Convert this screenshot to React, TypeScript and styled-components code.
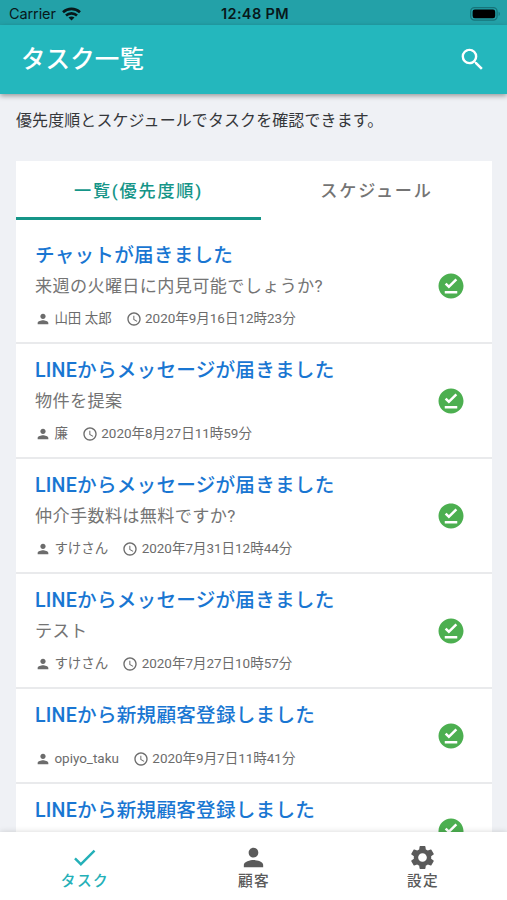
import React from "react";
import styled, { createGlobalStyle } from "styled-components";
import {
  MdAccessTime,
  MdCheck,
  MdOfflinePin,
  MdPerson,
  MdSearch,
  MdSettings,
} from "react-icons/md";

const GlobalStyle = createGlobalStyle`
  *, *::before, *::after { box-sizing: border-box; }
  body {
    margin: 0;
    background: #eff1f5;
    font-family: Roboto, "Noto Sans CJK JP", sans-serif;
  }
  svg { display: block; flex-shrink: 0; }
`;

const Screen = styled.div`
  display: flex;
  flex-direction: column;
  width: 100%;
  height: 900px;
  overflow: hidden;
`;

const StatusBar = styled.div`
  display: grid;
  grid-template-columns: 1fr auto 1fr;
  align-items: center;
  height: 25px;
  flex-shrink: 0;
  padding: 2px 6px 0 9px;
  background: #23a1a8;
  color: #08181a;
  font-family: Inter, sans-serif;
  font-size: 14.5px;
`;

const Carrier = styled.div`
  display: flex;
  align-items: center;
  gap: 6px;
  letter-spacing: -0.1px;
`;

const Clock = styled.div`
  font-weight: 600;
  letter-spacing: 0.35px;
`;

const BatterySlot = styled.div`
  display: flex;
  justify-content: flex-end;
`;

const AppBar = styled.header`
  position: relative;
  z-index: 1;
  display: flex;
  align-items: center;
  justify-content: space-between;
  height: 69px;
  flex-shrink: 0;
  padding: 0 20px 0 21px;
  background: #24b7bd;
  color: #fff;
  box-shadow: 0 2px 5px rgba(0, 0, 0, 0.36);
`;

const PageTitle = styled.h1`
  margin: 0;
  padding-top: 1px;
  font-size: 24.5px;
  font-weight: 500;
  line-height: 36px;
  letter-spacing: 0.1px;
`;

const Content = styled.main`
  flex: 1;
  min-height: 0;
  overflow: hidden;
  padding: 0 15px 0 16px;
`;

const Lead = styled.p`
  margin: 0;
  padding-top: 15px;
  height: 67px;
  font-size: 15.95px;
  line-height: 24px;
  letter-spacing: 0.15px;
  color: #35373a;
  white-space: nowrap;
`;

const Card = styled.section`
  background: #fff;
`;

const Tabs = styled.div`
  display: grid;
  grid-template-columns: 245px 1fr;
  height: 68px;
`;

const Tab = styled.button<{ $active?: boolean }>`
  height: 59px;
  padding: 3px 0 0;
  border: 0;
  border-bottom: 3px solid ${(p) => (p.$active ? "#159588" : "transparent")};
  background: none;
  font: 500 17.14px/24px Roboto, "Noto Sans CJK JP", sans-serif;
  letter-spacing: 1.8px;
  color: ${(p) => (p.$active ? "#159588" : "#747474")};
`;

const TaskRow = styled.article<{ $short?: boolean }>`
  display: flex;
  align-items: center;
  justify-content: space-between;
  height: ${(p) => (p.$short ? 95 : 115)}px;
  padding: 0 26px 0 19px;
  border-bottom: 2px solid #e9eaec;
`;

const TaskText = styled.div`
  display: flex;
  flex-direction: column;
  padding-top: 2px;
  white-space: nowrap;
`;

const TaskTitle = styled.h2`
  margin: 0;
  font-size: 19.6px;
  font-weight: 500;
  line-height: 30px;
  letter-spacing: 0.24px;
  color: #1976d2;
`;

const TaskBody = styled.p`
  margin: 0;
  min-height: 10px;
  font-size: 17.14px;
  line-height: 30px;
  letter-spacing: 0.35px;
  color: #747474;
`;

const Meta = styled.div`
  display: flex;
  gap: 14px;
  height: 24px;
  margin: 6px 0 1px;
  font-size: 13.47px;
  line-height: 24px;
  color: #6c6c6c;
`;

const MetaItem = styled.span`
  display: flex;
  align-items: center;
  gap: 3.4px;
`;

const BottomNav = styled.nav`
  position: relative;
  z-index: 1;
  display: grid;
  grid-template-columns: repeat(3, 1fr);
  height: 68px;
  flex-shrink: 0;
  background: #fff;
  box-shadow: 0 0 6px rgba(0, 0, 0, 0.16);
`;

const NavItem = styled.button<{ $active?: boolean }>`
  display: flex;
  flex-direction: column;
  align-items: center;
  padding: 11px 0 0;
  border: 0;
  background: none;
  font: 500 14.7px/18px Roboto, "Noto Sans CJK JP", sans-serif;
  letter-spacing: 1.4px;
  color: ${(p) => (p.$active ? "#24b0b8" : "#5a5a5a")};
`;

const NavIcon = styled.span`
  display: block;
  height: 29px;
`;

const NavLabel = styled.span`
  padding-left: 1px;
`;

type Task = { title: string; body?: string; person?: string; time?: string };

const tasks: Task[] = [
  {
    title: "チャットが届きました",
    body: "来週の火曜日に内見可能でしょうか?",
    person: "山田 太郎",
    time: "2020年9月16日12時23分",
  },
  {
    title: "LINEからメッセージが届きました",
    body: "物件を提案",
    person: "廉",
    time: "2020年8月27日11時59分",
  },
  {
    title: "LINEからメッセージが届きました",
    body: "仲介手数料は無料ですか?",
    person: "すけさん",
    time: "2020年7月31日12時44分",
  },
  {
    title: "LINEからメッセージが届きました",
    body: "テスト",
    person: "すけさん",
    time: "2020年7月27日10時57分",
  },
  {
    title: "LINEから新規顧客登録しました",
    person: "opiyo_taku",
    time: "2020年9月7日11時41分",
  },
  {
    title: "LINEから新規顧客登録しました",
  },
];

function WifiIcon() {
  return (
    <svg width="19" height="14" viewBox="0 0 19 14" fill="none" stroke="currentColor" strokeWidth="2.6">
      <path d="M1 5.2C5.8.7 13.2.7 18 5.2" />
      <path d="M4 8.5c3.1-2.9 7.9-2.9 11 0" />
      <path d="M9.5 13.6 6.5 10.5c1.7-1.5 4.3-1.5 6 0z" fill="currentColor" stroke="none" />
    </svg>
  );
}

function BatteryIcon() {
  return (
    <svg width="31" height="14" viewBox="0 0 31 14">
      <rect x="0.7" y="0.7" width="26.4" height="12.4" rx="3.8" fill="none" stroke="#17747a" strokeWidth="1.3" />
      <rect x="2.6" y="2.5" width="22.6" height="8.8" rx="2.2" fill="#000" />
      <path d="M28.6 4.8c1.7.6 1.7 3.6 0 4.2z" fill="#17747a" />
    </svg>
  );
}

function TaskItem({ task }: { task: Task }) {
  return (
    <TaskRow $short={!task.body}>
      <TaskText>
        <TaskTitle>{task.title}</TaskTitle>
        <TaskBody as={task.body ? "p" : "div"}>{task.body}</TaskBody>
        <Meta>
          {task.person && (
            <MetaItem>
              <MdPerson size={16} />
              {task.person}
            </MetaItem>
          )}
          {task.time && (
            <MetaItem>
              <MdAccessTime size={16} />
              {task.time}
            </MetaItem>
          )}
        </Meta>
      </TaskText>
      <MdOfflinePin size={30} color="#4caf50" />
    </TaskRow>
  );
}

export default function App() {
  return (
    <>
      <GlobalStyle />
      <Screen>
        <StatusBar>
          <Carrier>
            Carrier
            <WifiIcon />
          </Carrier>
          <Clock>12:48 PM</Clock>
          <BatterySlot>
            <BatteryIcon />
          </BatterySlot>
        </StatusBar>
        <AppBar>
          <PageTitle>タスク一覧</PageTitle>
          <MdSearch size={29} />
        </AppBar>
        <Content>
          <Lead>優先度順とスケジュールでタスクを確認できます。</Lead>
          <Card>
            <Tabs>
              <Tab $active>一覧(優先度順)</Tab>
              <Tab>スケジュール</Tab>
            </Tabs>
            {tasks.map((task, i) => (
              <TaskItem key={i} task={task} />
            ))}
          </Card>
        </Content>
        <BottomNav>
          <NavItem $active>
            <NavIcon>
              <MdCheck size={29} />
            </NavIcon>
            <NavLabel>タスク</NavLabel>
          </NavItem>
          <NavItem>
            <NavIcon>
              <MdPerson size={29} />
            </NavIcon>
            <NavLabel>顧客</NavLabel>
          </NavItem>
          <NavItem>
            <NavIcon>
              <MdSettings size={29} />
            </NavIcon>
            <NavLabel>設定</NavLabel>
          </NavItem>
        </BottomNav>
      </Screen>
    </>
  );
}
